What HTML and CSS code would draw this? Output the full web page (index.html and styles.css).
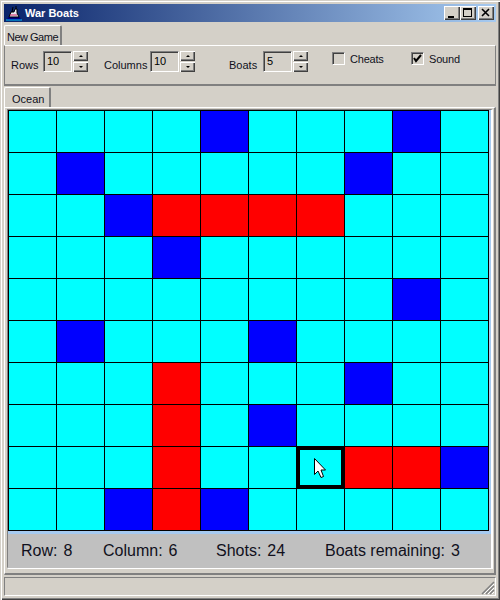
FILE: index.html
```html
<!DOCTYPE html>
<html lang="en">
<head>
    <meta charset="UTF-8">
    <meta name="viewport" content="width=device-width, initial-scale=1.0">
    <title>War Boats</title>
    <link rel="stylesheet" href="styles.css">
</head>
<body>

<div class="window">
    <div class="titlebar">
        <svg class="appicon" width="16" height="16" viewBox="0 0 16 16">
            <path d="M1 15 L15 15 L14 12 L2 12 Z" fill="#000080"/>
            <path d="M3 12 L5 7 L8 7 L9 4 L11 4 L11 8 L13 12 Z" fill="#e8e8f0" stroke="#000" stroke-width="1"/>
            <path d="M6 7 L7 2 M10 4 L10 1" stroke="#000" stroke-width="1"/>
            <path d="M0 15 L16 15" stroke="#00c0ff" stroke-width="1"/>
            <path d="M4 10 L11 10" stroke="#d02060" stroke-width="1"/>
        </svg>
        <span class="titletext">War Boats</span>
        <div class="winbuttons">
            <div class="winbtn"><svg width="16" height="14" viewBox="0 0 16 14"><path d="M4 10h6v2H4z"/></svg></div>
            <div class="winbtn"><svg width="16" height="14" viewBox="0 0 16 14"><path d="M3 2h9v9H3z M4 4v6h7V4z" fill-rule="evenodd"/></svg></div>
            <div class="winbtn winclose"><svg width="16" height="14" viewBox="0 0 16 14"><path d="M4 3l7 7M11 3l-7 7" stroke="#000" stroke-width="1.6" fill="none"/></svg></div>
        </div>
    </div>

    <div class="toolrow">
        <div class="tab newgame">New Game</div>
    </div>

    <div class="options">
        <div class="spinfield rows">
            <span class="lbl">Rows</span>
            <div class="spin"><div class="spinval">10</div><div class="spinbtns"><div class="spinbtn up"></div><div class="spinbtn down"></div></div></div>
        </div>
        <div class="spinfield cols">
            <span class="lbl">Columns</span>
            <div class="spin"><div class="spinval">10</div><div class="spinbtns"><div class="spinbtn up"></div><div class="spinbtn down"></div></div></div>
        </div>
        <div class="spinfield boats">
            <span class="lbl">Boats</span>
            <div class="spin"><div class="spinval">5</div><div class="spinbtns"><div class="spinbtn up"></div><div class="spinbtn down"></div></div></div>
        </div>
        <div class="check cheats"><div class="checkbox"></div><span>Cheats</span></div>
        <div class="check sound">
            <div class="checkbox"><svg width="11" height="11" viewBox="0 0 11 11"><path d="M2 5l2 3 5-6" stroke="#000" stroke-width="2" fill="none"/></svg></div>
            <span>Sound</span>
        </div>
    </div>

    <div class="tabrow">
        <div class="tab ocean">Ocean</div>
    </div>

    <div class="pane">
        <div class="boardwrap">
            <div class="board">
                <div class="c"></div><div class="c"></div><div class="c"></div><div class="c"></div><div class="c b"></div><div class="c"></div><div class="c"></div><div class="c"></div><div class="c b"></div><div class="c"></div>
                <div class="c"></div><div class="c b"></div><div class="c"></div><div class="c"></div><div class="c"></div><div class="c"></div><div class="c"></div><div class="c b"></div><div class="c"></div><div class="c"></div>
                <div class="c"></div><div class="c"></div><div class="c b"></div><div class="c r"></div><div class="c r"></div><div class="c r"></div><div class="c r"></div><div class="c"></div><div class="c"></div><div class="c"></div>
                <div class="c"></div><div class="c"></div><div class="c"></div><div class="c b"></div><div class="c"></div><div class="c"></div><div class="c"></div><div class="c"></div><div class="c"></div><div class="c"></div>
                <div class="c"></div><div class="c"></div><div class="c"></div><div class="c"></div><div class="c"></div><div class="c"></div><div class="c"></div><div class="c"></div><div class="c b"></div><div class="c"></div>
                <div class="c"></div><div class="c b"></div><div class="c"></div><div class="c"></div><div class="c"></div><div class="c b"></div><div class="c"></div><div class="c"></div><div class="c"></div><div class="c"></div>
                <div class="c"></div><div class="c"></div><div class="c"></div><div class="c r"></div><div class="c"></div><div class="c"></div><div class="c"></div><div class="c b"></div><div class="c"></div><div class="c"></div>
                <div class="c"></div><div class="c"></div><div class="c"></div><div class="c r"></div><div class="c"></div><div class="c b"></div><div class="c"></div><div class="c"></div><div class="c"></div><div class="c"></div>
                <div class="c"></div><div class="c"></div><div class="c"></div><div class="c r"></div><div class="c"></div><div class="c"></div>
                <div class="c focus">
                    <svg class="cursor" width="14" height="22" viewBox="0 0 14 22"><path d="M1.5 1.5 V17.5 L5 14 L8 20.5 L10.5 19.5 L8 13 L12.5 13 Z" fill="#fff" stroke="#000" stroke-width="1"/></svg>
                </div>
                <div class="c r"></div><div class="c r"></div><div class="c b"></div>
                <div class="c"></div><div class="c"></div><div class="c b"></div><div class="c r"></div><div class="c b"></div><div class="c"></div><div class="c"></div><div class="c"></div><div class="c"></div><div class="c"></div>
            </div>
            <div class="stats">
                <div class="stat st-row"><span>Row:</span><span>8</span></div>
                <div class="stat st-col"><span>Column:</span><span>6</span></div>
                <div class="stat st-shots"><span>Shots:</span><span>24</span></div>
                <div class="stat"><span>Boats remaining:</span><span>3</span></div>
            </div>
        </div>
    </div>

    <div class="statusbar">
        <svg class="grip" width="16" height="16" viewBox="0 0 16 16">
            <path d="M15 3L3 15M15 7L7 15M15 11L11 15" stroke="#808080" stroke-width="1.5"/>
            <path d="M15 5L5 15M15 9L9 15M15 13L13 15" stroke="#fff" stroke-width="1"/>
        </svg>
    </div>
</div>

</body>
</html>
```

FILE: styles.css
```css
body {
    margin: 0;
    font-family: "Liberation Sans", Arial, sans-serif;
    font-size: 11px;
    color: #000;
}
.window {
    width: 500px;
    height: 600px;
    box-sizing: border-box;
    padding: 4px;
    background: #d4d0c8;
    display: flex;
    flex-direction: column;
    box-shadow: inset 1px 1px 0 #d4d0c8, inset 2px 2px 0 #fff, inset -1px -1px 0 #404040, inset -2px -2px 0 #808080;
}
.titlebar {
    height: 18px;
    flex: none;
    display: flex;
    align-items: center;
    padding: 0 2px;
    background: linear-gradient(to right, #0a246a, #a6caf0);
    color: #fff;
    font-weight: bold;
}
.appicon {
    flex: none;
    margin-right: 3px;
}
.titletext {
    font-size: 11px;
    flex: 1;
}
.winbuttons {
    display: flex;
}
.winbtn {
    width: 16px;
    height: 14px;
    background: #d4d0c8;
    box-shadow: inset 1px 1px 0 #fff, inset -1px -1px 0 #404040, inset -2px -2px 0 #808080;
}
.winclose {
    margin-left: 2px;
}
.winbtn svg {
    display: block;
}
.toolrow {
    margin-top: 3px;
    height: 20px;
    flex: none;
    display: flex;
}
.tab {
    box-sizing: border-box;
    height: 20px;
    padding: 5px 0 0 2px;
    border-top: 1px solid #fff;
    border-left: 1px solid #fff;
    border-right: 2px solid #808080;
    border-radius: 2px 2px 0 0;
    color: #10101c;
    white-space: nowrap;
}
.newgame {
    width: 58px;
    letter-spacing: -0.5px;
}
.ocean {
    width: 47px;
    padding-left: 7px;
}
.options {
    flex: none;
    height: 41px;
    box-sizing: border-box;
    border-top: 1px solid #fff;
    border-left: 1px solid #808080;
    border-right: 1px solid #808080;
    border-bottom: 2px solid #808080;
    display: flex;
    align-items: flex-start;
    padding: 5px 0 0 6px;
}
.spinfield {
    display: flex;
    flex: none;
}
.lbl {
    padding-top: 8px;
    color: #10101c;
}
.rows {
    width: 93px;
}
.rows .lbl {
    width: 32px;
}
.cols {
    width: 125px;
}
.cols .lbl {
    width: 46px;
}
.boats {
    width: 103px;
}
.boats .lbl {
    width: 34px;
}
.spin {
    display: flex;
    gap: 1px;
}
.spinval {
    box-sizing: border-box;
    width: 29px;
    height: 21px;
    padding: 3px 0 0 3px;
    border-top: 1px solid #808080;
    border-left: 1px solid #808080;
    border-right: 1px solid #fff;
    border-bottom: 1px solid #fff;
    box-shadow: inset 1px 1px 0 #404040;
}
.spinbtns {
    display: flex;
    flex-direction: column;
    gap: 1px;
    width: 15px;
}
.spinbtn {
    height: 10px;
    background: #d4d0c8;
    box-shadow: inset 1px 1px 0 #fff, inset -1px -1px 0 #404040, inset -2px -2px 0 #808080;
    display: flex;
    align-items: center;
    justify-content: center;
}
.spinbtn::after {
    content: "";
    border-left: 2px solid transparent;
    border-right: 2px solid transparent;
}
.up::after {
    border-bottom: 2px solid #000;
}
.down::after {
    border-top: 2px solid #000;
}
.check {
    display: flex;
    align-items: center;
    gap: 5px;
    flex: none;
    margin-top: 1px;
    color: #10101c;
    letter-spacing: -0.2px;
}
.cheats {
    width: 79px;
}
.checkbox {
    box-sizing: border-box;
    width: 13px;
    height: 13px;
    border-top: 1px solid #808080;
    border-left: 1px solid #808080;
    border-right: 1px solid #fff;
    border-bottom: 1px solid #fff;
    box-shadow: inset 1px 1px 0 #404040;
}
.checkbox svg {
    display: block;
}
.tabrow {
    margin-top: 1px;
    height: 20px;
    flex: none;
    display: flex;
}
.pane {
    flex: none;
    height: 468px;
    box-sizing: border-box;
    border-top: 1px solid #fff;
    border-left: 1px solid #fff;
    border-right: 2px solid #808080;
    border-bottom: 2px solid #808080;
    padding: 1px 0 0 2px;
}
.boardwrap {
    width: 486px;
    height: 460px;
    box-sizing: border-box;
    border-top: 1px solid #808080;
    border-left: 1px solid #808080;
    border-right: 2px solid #fff;
    border-bottom: 2px solid #fff;
    background: #a6caf0;
}
.board {
    width: 481px;
    height: 421px;
    box-sizing: border-box;
    background: #000;
    display: grid;
    grid-template-columns: repeat(10, 47px);
    grid-template-rows: repeat(10, 41px);
    gap: 1px;
    padding: 1px;
}
.c {
    background: #00ffff;
}
.b {
    background: #0000ff;
}
.r {
    background: #ff0000;
}
.focus {
    position: relative;
    box-sizing: border-box;
    border: 3px solid #000;
}
.cursor {
    position: absolute;
    left: 13px;
    top: 7px;
}
.stats {
    margin-top: 3px;
    height: 34px;
    background: #c0c0c0;
    display: flex;
    align-items: center;
    font-size: 16px;
    color: #10101c;
    padding-left: 13px;
}
.stat {
    display: flex;
    gap: 6px;
    flex: none;
}
.st-row {
    width: 82px;
}
.st-col {
    width: 113px;
}
.st-shots {
    width: 109px;
}
.statusbar {
    position: relative;
    margin-top: 2px;
    flex: 1;
    border-top: 1px solid #808080;
    border-left: 1px solid #808080;
    border-right: 1px solid #fff;
    border-bottom: 1px solid #fff;
}
.grip {
    position: absolute;
    right: 0;
    bottom: 0;
}
```
